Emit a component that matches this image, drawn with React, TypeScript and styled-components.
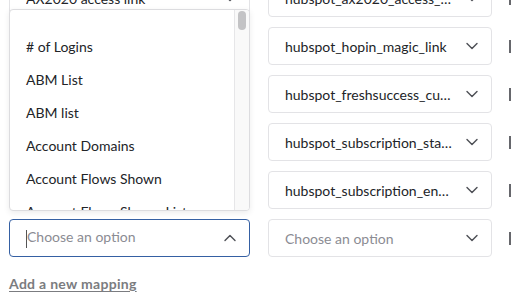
import React from "react";
import styled, { createGlobalStyle } from "styled-components";
import { ChevronDown, ChevronUp } from "lucide-react";

const GlobalStyle = createGlobalStyle`
  html, body {
    margin: 0;
    padding: 0;
    background: #ffffff;
    overflow: hidden;
  }
  body {
    font-family: "Lato", "Open Sans", sans-serif;
    color: #222428;
  }
`;

const Page = styled.div`
  padding-left: 9px;
  margin-top: -21px;
  display: flex;
  flex-direction: column;
`;

const Rows = styled.div`
  display: flex;
  flex-direction: column;
  gap: 10px;
`;

const Row = styled.div`
  display: flex;
  align-items: center;
`;

const Field = styled.div<{ $width: number; $focused?: boolean }>`
  position: relative;
  box-sizing: border-box;
  width: ${(p) => p.$width}px;
  height: 38px;
  margin-right: ${(p) => (p.$width > 230 ? 18 : 17)}px;
  display: flex;
  align-items: center;
  gap: 8px;
  padding: 0 9px 0 16px;
  border: 1px solid ${(p) => (p.$focused ? "#3560a3" : "#e3e3e6")};
  border-radius: 4px;
  background: #fff;
  font-size: 14px;
`;

const Value = styled.span<{ $placeholder?: boolean }>`
  flex: 1;
  min-width: 0;
  white-space: nowrap;
  overflow: hidden;
  text-overflow: ellipsis;
  color: ${(p) => (p.$placeholder ? "#8b8c93" : "#222428")};
`;

const Caret = styled.span`
  display: inline-block;
  width: 1px;
  height: 18px;
  background: #555;
  vertical-align: middle;
`;

const Icon = styled.span`
  display: flex;
  color: #4f5157;
`;

const RowAction = styled.span`
  display: block;
  width: 2px;
  height: 13px;
  background: #66676c;
`;

const Menu = styled.div`
  position: absolute;
  left: -1px;
  bottom: calc(100% + 9px);
  box-sizing: border-box;
  width: 241px;
  height: 202px;
  border: 1px solid #dcdcdf;
  border-radius: 4px;
  background: #fff;
  box-shadow: 0 2px 6px rgba(0, 0, 0, 0.08);
  overflow: hidden;
  z-index: 5;
`;

const MenuList = styled.ul`
  list-style: none;
  margin: 0;
  padding: 4px 15px 0 0;
  height: 100%;
  overflow: hidden;
  box-sizing: border-box;
`;

const ScrollTrack = styled.div`
  position: absolute;
  top: 0;
  right: 0;
  bottom: 0;
  width: 14px;
  background: #f9f9f9;
  border-left: 1px solid #e6e6e8;
`;

const ScrollThumb = styled.div`
  position: absolute;
  top: 1px;
  left: 3px;
  width: 8px;
  height: 19px;
  border-radius: 4px;
  background: #c3c3c5;
`;

const Option = styled.li<{ $empty?: boolean }>`
  padding: ${(p) => (p.$empty ? "0" : "6px 16px")};
  height: ${(p) => (p.$empty ? "16px" : "auto")};
  line-height: 21px;
  font-size: 14px;
  color: #222428;
  white-space: nowrap;
`;

const AddLink = styled.a`
  margin-top: 18px;
  align-self: flex-start;
  font-size: 14px;
  font-weight: 700;
  letter-spacing: 0.3px;
  line-height: 18px;
  color: #7b7c80;
  text-decoration: underline;
  text-underline-offset: 2px;
  cursor: pointer;
`;

const options = [
  "",
  "# of Logins",
  "ABM List",
  "ABM list",
  "Account Domains",
  "Account Flows Shown",
  "Account Flows Shown List",
  "Account Name",
  "Account Owner",
];

type RowData = { left: string; right: string };

const rows: RowData[] = [
  { left: "AX2020 access link", right: "hubspot_ax2020_access_link" },
  { left: "Hopin magic link", right: "hubspot_hopin_magic_link" },
  { left: "Freshsuccess customer", right: "hubspot_freshsuccess_customer" },
  { left: "Subscription start", right: "hubspot_subscription_start_date" },
  { left: "Subscription end", right: "hubspot_subscription_end_date" },
];

const Chevron = ({ up }: { up?: boolean }) => (
  <Icon>{up ? <ChevronUp size={20} strokeWidth={1.7} /> : <ChevronDown size={20} strokeWidth={1.7} />}</Icon>
);

export default function App() {
  return (
    <>
      <GlobalStyle />
      <Page>
        <Rows>
          {rows.map((r) => (
            <Row key={r.right}>
              <Field $width={241}>
                <Value>{r.left}</Value>
                <Chevron />
              </Field>
              <Field $width={224}>
                <Value>{r.right}</Value>
                <Chevron />
              </Field>
              <RowAction />
            </Row>
          ))}
          <Row>
            <Field $width={241} $focused>
              <Menu>
                <MenuList>
                  {options.map((o, i) => (
                    <Option key={i} $empty={o === ""}>
                      {o}
                    </Option>
                  ))}
                </MenuList>
                <ScrollTrack>
                  <ScrollThumb />
                </ScrollTrack>
              </Menu>
              <Value $placeholder>
                <Caret />
                Choose an option
              </Value>
              <Chevron up />
            </Field>
            <Field $width={224}>
              <Value $placeholder>Choose an option</Value>
              <Chevron />
            </Field>
            <RowAction />
          </Row>
        </Rows>
        <AddLink>Add a new mapping</AddLink>
      </Page>
    </>
  );
}
